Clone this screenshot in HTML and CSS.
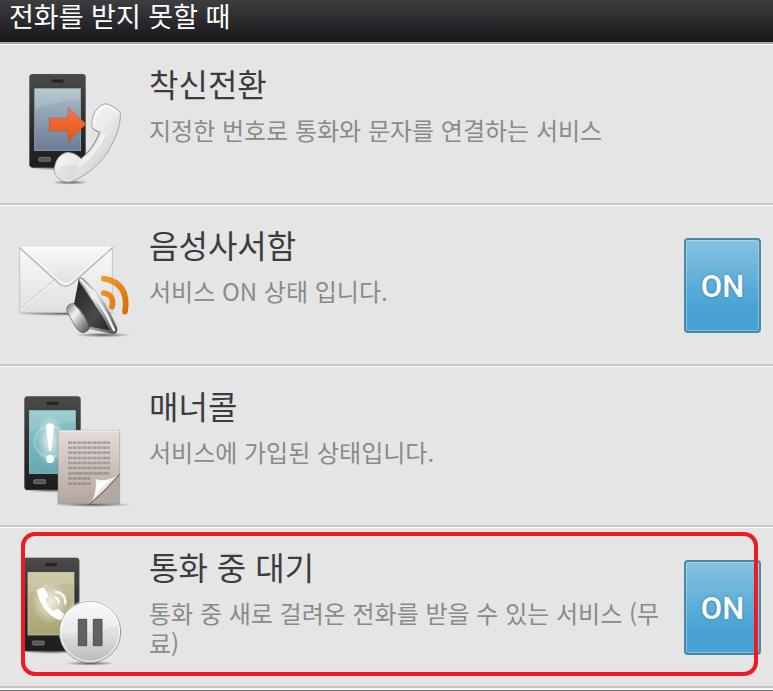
FILE: index.html
```
<!DOCTYPE html>
<html lang="ko">

<head>
    <meta charset="UTF-8" />
    <meta name="viewport" content="width=device-width, initial-scale=1" />
    <title>전화를 받지 못할 때</title>
    <link rel="stylesheet" href="styles.css">
</head>

<body>
    <header class="section-header">
        <h1>전화를 받지 못할 때</h1>
    </header>

    <!-- shared gradients and the phone body -->
    <svg class="defs" aria-hidden="true">
        <defs>
            <linearGradient id="body" x1="0" y1="0" x2="0" y2="1">
                <stop offset="0" stop-color="#4a4a4a" />
                <stop offset="0.5" stop-color="#303030" />
                <stop offset="1" stop-color="#1c1c1c" />
            </linearGradient>
            <linearGradient id="blue" x1="0" y1="0" x2="0" y2="1">
                <stop offset="0" stop-color="#abc0ca" />
                <stop offset="1" stop-color="#6b7b95" />
            </linearGradient>
            <linearGradient id="orange" x1="0" y1="0" x2="0" y2="1">
                <stop offset="0" stop-color="#f2764a" />
                <stop offset="1" stop-color="#e6540f" />
            </linearGradient>
            <linearGradient id="handset" x1="0" y1="0" x2="1" y2="1">
                <stop offset="0" stop-color="#ffffff" />
                <stop offset="0.5" stop-color="#ececec" />
                <stop offset="1" stop-color="#bdbdbd" />
            </linearGradient>
            <linearGradient id="paper" x1="0" y1="0" x2="0" y2="1">
                <stop offset="0" stop-color="#fafafa" />
                <stop offset="1" stop-color="#e0e0e0" />
            </linearGradient>
            <linearGradient id="metal" x1="0" y1="0" x2="1" y2="1">
                <stop offset="0" stop-color="#777" />
                <stop offset="0.35" stop-color="#f4f4f4" />
                <stop offset="0.65" stop-color="#999" />
                <stop offset="1" stop-color="#444" />
            </linearGradient>
            <linearGradient id="cone" x1="0" y1="0" x2="1" y2="1">
                <stop offset="0" stop-color="#222" />
                <stop offset="0.6" stop-color="#4a4a4a" />
                <stop offset="1" stop-color="#1a1a1a" />
            </linearGradient>
            <linearGradient id="wave" x1="0" y1="0" x2="1" y2="1">
                <stop offset="0" stop-color="#f09a2a" />
                <stop offset="1" stop-color="#d96f0a" />
            </linearGradient>
            <linearGradient id="teal" x1="0" y1="0" x2="0" y2="1">
                <stop offset="0" stop-color="#8fc6cc" />
                <stop offset="1" stop-color="#62a9b2" />
            </linearGradient>
            <linearGradient id="doc" x1="0" y1="0" x2="0" y2="1">
                <stop offset="0" stop-color="#e4dcd8" />
                <stop offset="1" stop-color="#b3a49f" />
            </linearGradient>
            <linearGradient id="curl" x1="0" y1="0" x2="1" y2="1">
                <stop offset="0" stop-color="#e0dedc" />
                <stop offset="0.4" stop-color="#ffffff" />
                <stop offset="0.7" stop-color="#a09690" />
            </linearGradient>
            <linearGradient id="olive" x1="0" y1="0" x2="0" y2="1">
                <stop offset="0" stop-color="#c9c3a0" />
                <stop offset="1" stop-color="#aaa373" />
            </linearGradient>
            <linearGradient id="disc" x1="0" y1="0" x2="0" y2="1">
                <stop offset="0" stop-color="#f6f6f6" />
                <stop offset="0.55" stop-color="#dedede" />
                <stop offset="1" stop-color="#b9b9b9" />
            </linearGradient>
            <radialGradient id="glow">
                <stop offset="0" stop-color="#fff" stop-opacity="0.8" />
                <stop offset="1" stop-color="#fff" stop-opacity="0" />
            </radialGradient>
            <radialGradient id="shade">
                <stop offset="0" stop-color="#000" stop-opacity="0.6" />
                <stop offset="1" stop-color="#000" stop-opacity="0" />
            </radialGradient>
            <g id="phone">
                <ellipse cx="84" cy="281" rx="88" ry="8" fill="url(#shade)" />
                <rect width="169" height="281" rx="10" fill="url(#body)" />
                <rect x="1" y="1" width="167" height="279" rx="9" fill="none" stroke="#666" stroke-opacity="0.5" stroke-width="2" />
                <rect x="66" y="16" width="37" height="10" rx="3" fill="#222" stroke="#555" />
                <rect x="28" y="250" width="36" height="12" rx="4" fill="#555" stroke="#8a8a8a" stroke-width="2" />
            </g>
        </defs>
    </svg>

    <main>
        <ul class="services">
            <li class="service">
                <svg class="icon" viewBox="0 0 447 474" aria-hidden="true">
                    <g transform="translate(30 45)">
                        <use href="#phone" x="58" y="42" />
                        <rect x="74" y="86" width="138" height="186" fill="url(#blue)" stroke="#9ab0bf" stroke-width="2" />
                        <path d="M75 87H211V119Q135 122 75 148Z" fill="#fff" fill-opacity="0.14" />
                        <path d="M118 174H174V143L229 192L174 245V213H118Z" fill="url(#orange)" stroke="#a34a28" stroke-opacity="0.5" stroke-width="2" />
                        <ellipse cx="180" cy="367" rx="55" ry="7" fill="url(#shade)" />
                        <path d="M288 131C306 137 321 145 331 158C334 201 310 252 282 292C251 329 219 350 184 365C160 372 134 350 133 333C133 310 143 287 165 279C180 275 198 281 213 296C239 275 257 248 269 217C257 213 247 209 246 201C242 171 259 134 288 131Z" fill="url(#handset)" stroke="#a5a5a5" stroke-width="3" />
                        <path d="M251 196C250 168 266 142 291 138Q312 146 325 160" fill="none" stroke="#fff" stroke-width="6" stroke-opacity="0.65" />
                        <path d="M282 225Q257 280 208 315" fill="none" stroke="#fff" stroke-width="10" stroke-opacity="0.5" stroke-linecap="round" />
                        <path d="M138 335Q143 353 180 362Q202 347 203 317Q180 309 162 318Q145 323 138 335Z" fill="#aaa" fill-opacity="0.15" />
                        <path d="M213 296C239 275 257 248 269 217L248 206" fill="none" stroke="#777" stroke-opacity="0.7" stroke-width="3" />
                    </g>
                </svg>
                <div class="info">
                    <h2>착신전환</h2>
                    <p>지정한 번호로 통화와 문자를 연결하는 서비스</p>
                </div>
            </li>

            <li class="service">
                <svg class="icon" viewBox="0 0 447 474" aria-hidden="true">
                    <g transform="translate(0 42)">
                        <ellipse cx="198" cy="280" rx="160" ry="8" fill="url(#shade)" />
                        <rect x="59" y="81" width="278" height="196" rx="3" fill="url(#paper)" stroke="#c4c4c4" stroke-width="3" />
                        <path d="M61 268L165 178M335 268L231 178" fill="none" stroke="#cfcfcf" stroke-width="4" />
                        <path d="M61 271L165 182" fill="none" stroke="#fff" stroke-width="3" />
                        <path d="M60 84L177 190Q197 207 217 190L336 84Z" fill="#f5f5f5" stroke="#bcbcbc" stroke-width="5" />
                        <path d="M62 81L179 183Q197 199 215 183L334 81Z" fill="url(#paper)" stroke="#fff" stroke-width="3" />
                        <ellipse cx="310" cy="345" rx="85" ry="7" fill="url(#shade)" />
                        <path d="M203 258Q212 248 224 251L271 316Q270 333 249 339Q237 336 228 323L202 277Q198 265 203 258Z" fill="url(#metal)" stroke="#555" stroke-width="2" />
                        <path d="M236 180L341 339L267 324Q258 282 222 252Z" fill="url(#cone)" />
                        <path d="M236 178Q242 169 250 176Q310 228 351 322Q356 342 338 342L268 326L270 320L331 332Q290 246 240 190Z" fill="url(#metal)" stroke="#777" stroke-width="1" />
                        <path d="M243 180Q305 243 342 330" fill="none" stroke="#eee" stroke-width="8" stroke-linecap="round" />
                        <path d="M311 176Q389 189 375 275M311 219Q344 224 336 260" fill="none" stroke="url(#wave)" stroke-width="17" stroke-linecap="round" />
                    </g>
                </svg>
                <div class="info">
                    <h2>음성사서함</h2>
                    <p>서비스 ON 상태 입니다.</p>
                </div>
                <button type="button" class="toggle" aria-label="음성사서함 ON" aria-pressed="true">ON</button>
            </li>

            <li class="service">
                <svg class="icon" viewBox="0 0 447 474" aria-hidden="true">
                    <g transform="translate(30 39)">
                        <use href="#phone" x="43" y="49" />
                        <rect x="58" y="92" width="138" height="188" fill="url(#teal)" stroke="#a7d2d6" stroke-width="2" />
                        <path d="M59 93H195V126Q120 132 59 156Z" fill="#fff" fill-opacity="0.12" />
                        <circle cx="120" cy="185" r="46" fill="none" stroke="#b9e0e3" stroke-opacity="0.4" stroke-width="8" />
                        <ellipse cx="120" cy="182" rx="42" ry="78" fill="url(#glow)" />
                        <path d="M108 142Q109 130 120 130Q131 130 132 142L123 213H117Z" fill="#fff" />
                        <circle cx="120" cy="237" r="12" fill="#fff" />
                        <ellipse cx="248" cy="374" rx="120" ry="7" fill="url(#shade)" />
                        <path d="M144 151H329V281L242 371H144Z" fill="url(#doc)" />
                        <path d="M329 281V371H240Z" fill="#b5a8a3" />
                        <path d="M144 371V151H329V371Z" fill="none" stroke="#8f8581" stroke-opacity="0.7" stroke-width="2" />
                        <path d="M146 153H328" stroke="#f5f0ee" stroke-width="3" />
                        <path d="M174 188H300M174 203H299M174 218H300M174 234H300M174 249H299M174 264H300M176 280H299M174 295H242M174 311H243" stroke="#776e6b" stroke-opacity="0.5" stroke-width="8" stroke-dasharray="7 1 5 2 9 1 4 1" />
                        <path d="M329 281Q291 307 256 296Q261 336 240 371Q290 327 329 281Z" fill="url(#curl)" stroke="#8f8783" stroke-width="1" />
                        <path d="M329 283Q291 329 241 371" fill="none" stroke="#5c5350" stroke-width="3" />
                    </g>
                </svg>
                <div class="info">
                    <h2>매너콜</h2>
                    <p>서비스에 가입된 상태입니다.</p>
                </div>
            </li>

            <li class="service highlighted">
                <svg class="icon" viewBox="0 0 447 474" aria-hidden="true">
                    <g transform="translate(30 -24)">
                        <use href="#phone" x="39" y="113" />
                        <rect x="54" y="157" width="138" height="188" fill="url(#olive)" stroke="#d4cfb4" stroke-width="2" />
                        <path d="M55 158H191V190Q120 193 55 220Z" fill="#fff" fill-opacity="0.12" />
                        <ellipse cx="120" cy="247" rx="55" ry="65" fill="url(#glow)" />
                        <path d="M80 211Q90 202 103 203L115 226Q113 234 105 237Q112 260 130 274Q137 266 145 266L162 283Q160 295 149 301Q96 281 80 211Z" fill="#fff" />
                        <path d="M135 233Q147 236 146 249M137 215Q168 220 166 251" fill="none" stroke="#fff" stroke-width="6" stroke-linecap="round" />
                        <ellipse cx="240" cy="430" rx="75" ry="7" fill="url(#shade)" />
                        <circle cx="240" cy="336" r="92" fill="url(#disc)" stroke="#999" stroke-width="3" />
                        <path d="M151 337Q190 350 329 317A89 89 0 0 0 151 337Z" fill="#fff" fill-opacity="0.3" />
                        <circle cx="240" cy="336" r="88" fill="none" stroke="#fff" stroke-opacity="0.7" stroke-width="4" />
                        <path d="M205 298H230V377H205ZM250 298H276V377H250Z" fill="#626262" stroke="#4d4d4d" stroke-width="3" />
                    </g>
                </svg>
                <div class="info">
                    <h2>통화 중 대기</h2>
                    <p>통화 중 새로 걸려온 전화를 받을 수 있는 서비스 (무료)</p>
                </div>
                <button type="button" class="toggle" aria-label="통화 중 대기 ON" aria-pressed="true">ON</button>
            </li>
        </ul>
    </main>

    <script>
        document.querySelectorAll(".toggle").forEach(button => {
            button.onclick = function () {
                const on = button.getAttribute("aria-pressed") !== "true";
                button.setAttribute("aria-pressed", on);
                button.textContent = on ? "ON" : "OFF";
            }
        });
    </script>
</body>

</html>
```
FILE: styles.css
```
* {
    box-sizing: border-box;
}

body {
    margin: 0;
    font-family: "Noto Sans CJK KR", sans-serif;
    background-color: #e5e5e5;
    color: #3c3c3c;
}

.defs {
    position: absolute;
    width: 0;
    height: 0;
}

.section-header {
    height: 44px;
    padding: 0 9px;
    background: linear-gradient(#3e3e41, #17171b);
    border-bottom: 2px solid #a8a8a8;
}

.section-header h1 {
    margin: 0;
    font-size: 27px;
    font-weight: 400;
    line-height: 32px;
    color: #fff;
}

.services {
    margin: 0;
    padding: 0;
    list-style: none;
    border-bottom: 2px solid #f6f6f6;
}

main {
    border-bottom: 1px solid #777;
}

.service {
    position: relative;
    display: flex;
    min-height: 161px;
    padding-right: 12px;
    border-top: 1px solid #f8f8f8;
    border-bottom: 2px solid #c6c6c6;
}

.icon {
    flex: none;
    width: 149px;
    height: 158px;
}

.info {
    flex: 1;
    padding: 16px 8px 10px 0;
}

.info h2 {
    margin: 0 0 10px;
    font-size: 32px;
    font-weight: 400;
    line-height: 44px;
}

.info p {
    margin: 0;
    font-size: 24px;
    font-weight: 400;
    line-height: 30px;
    color: #8a8a8a;
}

.toggle {
    flex: none;
    align-self: center;
    width: 77px;
    height: 95px;
    padding: 3px 0 0;
    border: 2px solid #4a88a8;
    border-radius: 4px;
    background: linear-gradient(#86c1e0, #48a3d4 75%);
    box-shadow: inset 0 0 0 1px rgba(255, 255, 255, 0.3);
    font-family: Roboto, sans-serif;
    font-size: 31px;
    font-weight: 500;
    color: #fff;
    text-shadow: 0 0 3px rgba(20, 80, 120, 0.5);
    cursor: pointer;
}

/* red frame drawn over the row */
.highlighted::after {
    content: "";
    position: absolute;
    top: 4px;
    right: 15px;
    bottom: 10px;
    left: 21px;
    border: 4px solid #ed1c24;
    border-radius: 14px;
    pointer-events: none;
}
```
